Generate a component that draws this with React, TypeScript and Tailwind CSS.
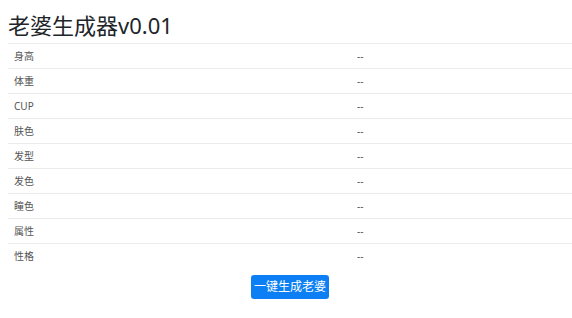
const fields = ['身高', '体重', 'CUP', '肤色', '发型', '发色', '瞳色', '属性', '性格'];

export default function App() {
  return (
    <div className="min-h-screen bg-white pl-2 pt-3 font-['Noto_Sans','Noto_Sans_CJK_SC',sans-serif]">
      <h1 className="mb-[5px] text-[22px] leading-[26px] text-[#212529]">老婆生成器v0.01</h1>

      <table className="w-full border-collapse text-[10px] leading-[14px] text-[#555]">
        <tbody>
          {fields.map((name) => (
            <tr key={name}>
              <td className="w-[349px] border-t border-[#ececec] py-[5px] pl-[6px]">{name}</td>
              <td className="border-t border-[#ececec] py-[5px]">--</td>
            </tr>
          ))}
        </tbody>
      </table>

      <div className="mt-[7px] flex justify-center">
        <button className="h-6 w-[78px] rounded-[3px] bg-[#0d7ff5] text-[12px] leading-6 text-white">
          一键生成老婆
        </button>
      </div>
    </div>
  );
}
